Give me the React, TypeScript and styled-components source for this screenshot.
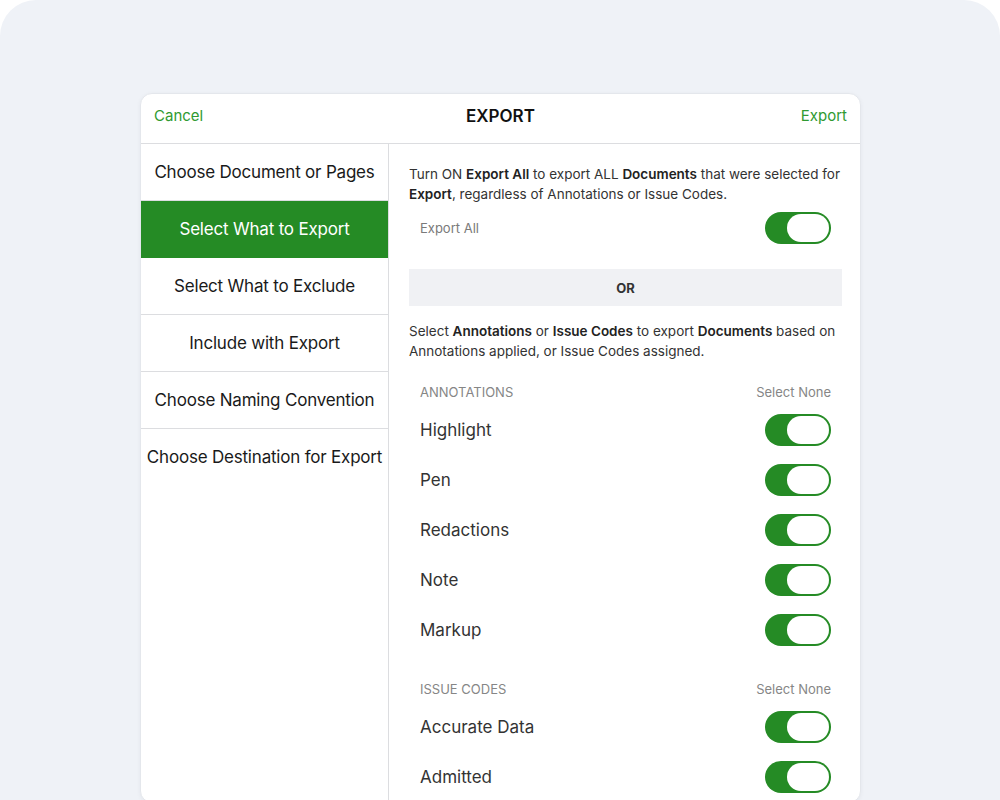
import React from 'react';
import styled, { createGlobalStyle } from 'styled-components';

const GlobalStyle = createGlobalStyle`
    html, body {
        margin: 0;
        padding: 0;
        background: #ffffff;
    }
    body {
        font-family: Inter, "Liberation Sans", Arial, sans-serif;
        -webkit-font-smoothing: antialiased;
    }
`;

const GREEN = '#258b25';
const GREEN_TEXT = '#2f9a31';

const sidebarItems = [
    'Choose Document or Pages',
    'Select What to Export',
    'Select What to Exclude',
    'Include with Export',
    'Choose Naming Convention',
    'Choose Destination for Export',
];

const annotations = ['Highlight', 'Pen', 'Redactions', 'Note', 'Markup'];
const issueCodes = ['Accurate Data', 'Admitted'];

const Toggle = ({ on = true }: { on?: boolean }) => (
    <Track $on={on}>
        <Knob $on={on} />
    </Track>
);

const Section = ({ title, items }: { title: string; items: string[] }) => (
    <SectionWrap>
        <SectionHeader>
            <SectionTitle>{title}</SectionTitle>
            <SelectNone>Select None</SelectNone>
        </SectionHeader>
        {items.map((item) => (
            <OptionRow key={item}>
                <OptionLabel>{item}</OptionLabel>
                <Toggle />
            </OptionRow>
        ))}
    </SectionWrap>
);

export default function App() {
    return (
        <>
            <GlobalStyle />
            <Frame>
                <Card>
                    <Header>
                        <HeaderLink>Cancel</HeaderLink>
                        <Title>EXPORT</Title>
                        <HeaderLink $right>Export</HeaderLink>
                    </Header>
                    <Body>
                        <Sidebar>
                            {sidebarItems.map((item, i) => (
                                <SideItem key={item} $active={i === 1}>
                                    {item}
                                </SideItem>
                            ))}
                        </Sidebar>
                        <Main>
                            <Paragraph>
                                Turn ON <b>Export All</b> to export ALL <b>Documents</b> that were selected for{' '}
                                <b>Export</b>, regardless of Annotations or Issue Codes.
                            </Paragraph>
                            <ExportAllRow>
                                <SmallLabel>Export All</SmallLabel>
                                <Toggle />
                            </ExportAllRow>
                            <OrBar>OR</OrBar>
                            <Paragraph>
                                Select <b>Annotations</b> or <b>Issue Codes</b> to export <b>Documents</b> based on
                                Annotations applied, or Issue Codes assigned.
                            </Paragraph>
                            <Section title="Annotations" items={annotations} />
                            <Section title="Issue Codes" items={issueCodes} />
                        </Main>
                    </Body>
                </Card>
            </Frame>
        </>
    );
}

const Frame = styled.div`
    width: 1000px;
    height: 800px;
    background: #eff2f7;
    border-radius: 36px 36px 0 0;
    padding-top: 93px;
    box-sizing: border-box;
    overflow: hidden;
`;

const Card = styled.div`
    box-sizing: border-box;
    width: 721px;
    margin-left: 140px;
    background: #ffffff;
    border: 1px solid #e4e7ec;
    border-radius: 12px;
    box-shadow: 0 1px 4px rgba(30, 40, 60, 0.05);
    overflow: hidden;
`;

const Header = styled.div`
    display: grid;
    grid-template-columns: 1fr auto 1fr;
    align-items: center;
    height: 49px;
    padding: 0 13px;
    border-bottom: 1px solid #dcdde0;
`;

const HeaderLink = styled.div<{ $right?: boolean }>`
    font-size: 15px;
    color: ${GREEN_TEXT};
    text-align: ${(p) => (p.$right ? 'right' : 'left')};
    margin-top: -6px;
`;

const Title = styled.div`
    font-size: 17px;
    font-weight: 600;
    color: #111111;
    margin-top: -5px;
`;

const Body = styled.div`
    display: flex;
`;

const Sidebar = styled.div`
    width: 247px;
    flex-shrink: 0;
    border-right: 1px solid #dcdde0;
`;

const SideItem = styled.div<{ $active?: boolean }>`
    height: 56px;
    display: flex;
    align-items: center;
    justify-content: center;
    font-size: 17px;
    letter-spacing: -0.2px;
    color: ${(p) => (p.$active ? '#ffffff' : '#1a1a1a')};
    background: ${(p) => (p.$active ? GREEN : 'transparent')};
    border-bottom: 1px solid ${(p) => (p.$active ? GREEN : '#dcdde0')};
    white-space: nowrap;

    &:last-child {
        border-bottom: none;
    }
`;

const Main = styled.div`
    flex: 1;
    padding: 20px 18px 0 20px;
`;

const Paragraph = styled.p`
    margin: 0;
    font-size: 13.5px;
    line-height: 20px;
    color: #333333;

    b {
        font-weight: 600;
        color: #222222;
    }
`;

const ExportAllRow = styled.div`
    display: flex;
    align-items: center;
    justify-content: space-between;
    height: 32px;
    margin-top: 8px;
    padding: 0 11px;
`;

const SmallLabel = styled.span`
    font-size: 13px;
    color: #7a7a7a;
`;

const OrBar = styled.div`
    height: 37px;
    margin: 25px 0 15px;
    background: #f0f1f4;
    display: flex;
    align-items: center;
    justify-content: center;
    font-size: 13px;
    font-weight: 700;
    color: #333333;
`;

const SectionWrap = styled.div`
    margin-top: 23px;

    & + & {
        margin-top: 26px;
    }
`;

const SectionHeader = styled.div`
    display: flex;
    justify-content: space-between;
    align-items: center;
    height: 16px;
    padding: 0 11px;
    margin-bottom: 5px;
`;

const SectionTitle = styled.span`
    font-size: 13px;
    text-transform: uppercase;
    color: #868686;
`;

const SelectNone = styled.span`
    font-size: 13px;
    color: #868686;
`;

const OptionRow = styled.div`
    display: flex;
    align-items: center;
    justify-content: space-between;
    height: 50px;
    padding: 0 11px;
`;

const OptionLabel = styled.span`
    font-size: 17px;
    color: #333333;
`;

const Track = styled.div<{ $on: boolean }>`
    width: 66px;
    height: 32px;
    border-radius: 16px;
    background: ${(p) => (p.$on ? GREEN : '#e3e4e8')};
    box-sizing: border-box;
    padding: 2px;
    display: flex;
    justify-content: ${(p) => (p.$on ? 'flex-end' : 'flex-start')};
`;

const Knob = styled.div<{ $on: boolean }>`
    width: 42px;
    height: 28px;
    border-radius: 14px;
    background: #ffffff;
`;
